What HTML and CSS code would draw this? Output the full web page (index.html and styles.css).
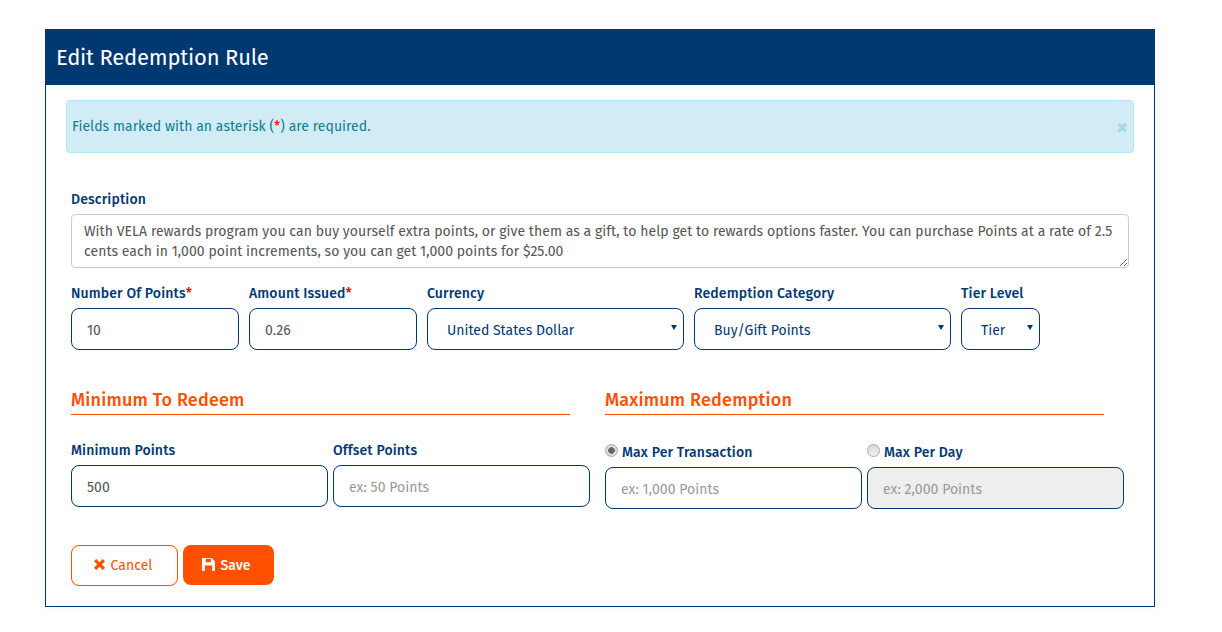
FILE: index.html
```html
<!DOCTYPE html>
<html lang="en">
<head>
<meta charset="utf-8">
<title>Edit Redemption Rule</title>
<link rel="stylesheet" href="styles.css">
</head>
<body>
<main class="panel">
  <h1 class="panel-title">Edit Redemption Rule</h1>
  <div class="panel-body">
    <div class="alert">
      <span>Fields marked with an asterisk (<span class="req">*</span>) are required.</span>
      <span class="alert-close">×</span>
    </div>
    <div class="field desc">
      <label class="label desc-label">Description</label>
      <textarea class="textarea" rows="2">With VELA rewards program you can buy yourself extra points, or give them as a gift, to help get to rewards options faster. You can purchase Points at a rate of 2.5 cents each in 1,000 point increments, so you can get 1,000 points for $25.00</textarea>
    </div>
    <div class="top-row">
      <div class="field w168"><label class="label">Number Of Points<span class="req">*</span></label><input class="input" value="10"></div>
      <div class="field w168"><label class="label">Amount Issued<span class="req">*</span></label><input class="input" value="0.26"></div>
      <div class="field w257"><label class="label">Currency</label><div class="select-wrap"><select class="select"><option>United States Dollar</option></select></div></div>
      <div class="field w257"><label class="label">Redemption Category</label><div class="select-wrap"><select class="select"><option>Buy/Gift Points</option></select></div></div>
      <div class="field w79"><label class="label">Tier Level</label><div class="select-wrap"><select class="select"><option>Tier</option></select></div></div>
    </div>
    <div class="sections">
      <section class="section min">
        <h2 class="section-title">Minimum To Redeem</h2>
        <div class="pair">
          <div class="field"><label class="label">Minimum Points</label><input class="input" value="500"></div>
          <div class="field"><label class="label">Offset Points</label><input class="input" placeholder="ex: 50 Points"></div>
        </div>
      </section>
      <section class="section max">
        <h2 class="section-title">Maximum Redemption</h2>
        <div class="pair radios">
          <div class="field"><label class="label radio-label"><input class="radio" type="radio" name="m" checked>Max Per Transaction</label><input class="input" placeholder="ex: 1,000 Points"></div>
          <div class="field"><label class="label radio-label"><input class="radio" type="radio" name="m">Max Per Day</label><input class="input" placeholder="ex: 2,000 Points" disabled></div>
        </div>
      </section>
    </div>
    <div class="actions">
      <button class="btn btn-cancel" type="button"><svg class="icon" viewBox="0 0 12 12"><path d="M3 .9 6 3.9 9 .9 11.1 3 8.1 6 11.1 9 9 11.1 6 8.1 3 11.1.9 9 3.9 6 .9 3z"/></svg>Cancel</button>
      <button class="btn btn-save" type="button"><svg class="icon" viewBox="0 0 14 14"><path fill-rule="evenodd" d="M1 0H10.5L14 3.5V13a1 1 0 0 1-1 1H1a1 1 0 0 1-1-1V1a1 1 0 0 1 1-1zM4 .8V4.5H9.6V.8zM3 8V14H11V8z"/></svg>Save</button>
    </div>
  </div>
</main>
</body>
</html>
```

FILE: styles.css
```css
* { box-sizing: border-box; }
html, body { height: 100%; }
body {
  margin: 0;
  padding: 29px 67px 0 45px;
  background: #fff;
  font-family: "Fira Sans", "Open Sans", sans-serif;
  font-size: 14px;
  letter-spacing: .045px;
  color: #003872;
}
.panel {
  width: 1110px;
  height: 578px;
  border: 1px solid #003872;
  border-top: 0;
  box-shadow: 2px 2px 12px rgba(0, 0, 0, .04);
}
.panel-title {
  margin: 0 -1px;
  height: 56px;
  padding: 0 11px;
  background: #003872;
  color: #fff;
  font-size: 22px;
  font-weight: 400;
  letter-spacing: -.2px;
  line-height: 57px;
}
.panel-body { padding: 15px 20px 0; }
.alert {
  position: relative;
  height: 53px;
  padding: 0 5px;
  display: flex;
  align-items: center;
  background: #d2ecf6;
  border: 1px solid #aee8f5;
  border-radius: 4px;
  color: #0f7c91;
}
.alert-close { position: absolute; right: 5px; top: 13px; font-size: 23px; line-height: 26px; font-weight: 700; color: #a8d6e4; }
.req { color: #f00; }
.field { display: flex; flex-direction: column; min-width: 0; }
.label {
  font-size: 14px;
  font-weight: 500;
  letter-spacing: .14px;
  line-height: 22px;
  height: 20px;
  margin-bottom: 5px;
  white-space: nowrap;
}
.desc { margin: 37px 5px 0; }
.desc-label { line-height: 20px; }
.textarea {
  display: block;
  width: 100%;
  height: 54px;
  margin-top: -1px;
  padding: 7px 12px 5px;
  border: 1.5px solid #ccc;
  border-radius: 4px;
  color: #555;
  font: inherit;
  letter-spacing: inherit;
  line-height: 20px;
  background: #fff;
}
.top-row { display: flex; gap: 10px; margin: 15px 0 0 5px; }
.w168 { width: 168px; }
.w257 { width: 257px; }
.w79 { width: 79px; }
.input, .select {
  display: block;
  width: 100%;
  height: 42px;
  border: 1px solid #003872;
  border-radius: 8px;
  background: #fff;
  font: inherit;
  letter-spacing: inherit;
  color: #555;
  padding: 2px 15px 0;
  outline: 0;
}
.input::placeholder { color: #999; opacity: 1; }
.input:disabled { background: #eee; }
.select { appearance: none; color: #003872; letter-spacing: 0; padding: 2px 19px 0; }
.select-wrap { position: relative; }
.select-wrap::after {
  content: "";
  position: absolute;
  right: 7px;
  top: 17px;
  border: 3px solid transparent;
  border-top: 5px solid #003872;
  border-bottom: 0;
}
.sections { display: flex; margin: 34px 0 0 5px; gap: 35px; }
.section { flex: none; }
.min { width: 499px; }
.max { width: 519px; }
.section-title {
  margin: 0;
  width: 499px;
  height: 31px;
  font-size: 18px;
  font-weight: 500;
  letter-spacing: .2px;
  line-height: 32px;
  color: #ff5000;
  border-bottom: 1px solid #ff5000;
}
.pair { display: grid; grid-template-columns: 257px 257px; gap: 5px; margin-top: 25px; }
.radios { margin-top: 27px; }
.radio-label { display: flex; align-items: center; height: 20px; margin-bottom: 5px; padding-top: 2px; line-height: 22px; }
.radio {
  appearance: none;
  flex: none;
  width: 13px;
  height: 13px;
  margin: 0 4px 6px 0;
  border-radius: 50%;
  border: 1px solid #a9a9a9;
  background: linear-gradient(#d8d8d8, #f2f2f2);
}
.radio:checked { background: radial-gradient(circle, #666 0 3px, #dcdcdc 3.6px); }
.actions { display: flex; gap: 5px; margin: 36px 0 0 5px; }
.btn {
  display: flex;
  align-items: center;
  justify-content: center;
  height: 41px;
  border-radius: 8px;
  font: inherit;
  letter-spacing: inherit;
  padding: 0 4px 0 0;
}
.icon { width: 13px; height: 13px; fill: currentColor; margin-right: 5px; margin-top: -2px; }
.btn-cancel { width: 107px; background: #fff; border: 1px solid #ff5000; color: #ff5000; }
.btn-save { width: 91px; height: 40px; background: #ff5000; border: 0; color: #fff; font-weight: 500; }
```
